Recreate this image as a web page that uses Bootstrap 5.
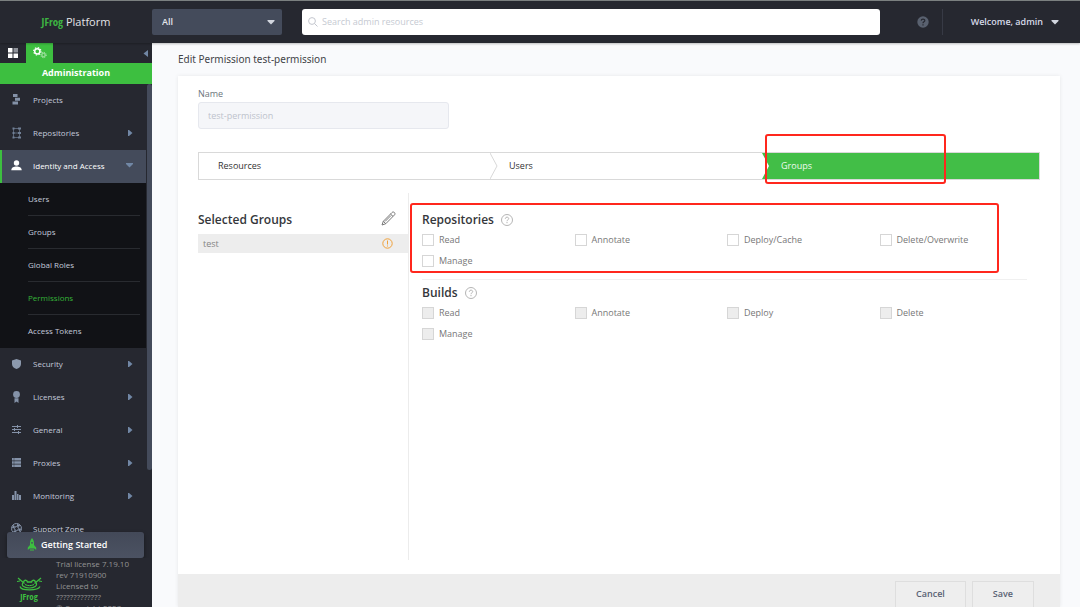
<!DOCTYPE html>
<html lang="en">
<head>
<meta charset="utf-8">
<meta name="viewport" content="width=device-width, initial-scale=1">
<title>JFrog Platform</title>
<link href="https://cdn.jsdelivr.net/npm/bootstrap@5.3.0/dist/css/bootstrap.min.css" rel="stylesheet">
<style>
:root{--jf-green:#3dbf40;--jf-dark:#262830;--jf-slate:#444b5b}
body{font-family:"Open Sans","Noto Sans",sans-serif;font-size:9px;line-height:16px;color:#414347;background:#f9fafc}
a{text-decoration:none}
svg{display:block;flex:none}
button{font:inherit}

/* top bar */
.topbar{height:43px;background:var(--jf-dark);border-top:1px solid #7b8080;box-shadow:0 1px 2px #00000040;z-index:2}
.brand{width:152px;font-size:11px;color:#e4e5e8}
.brand b{font-family:"Open Sans Condensed","Open Sans",sans-serif;font-weight:600;color:#3db342}
.scope-select{width:130px;height:26px;background:var(--jf-slate);color:#e2e4ea;border:0;border-radius:2px;padding:0 10px;font-weight:600;appearance:none}
.scope{position:relative}
.scope svg{position:absolute;right:7px;top:11px;pointer-events:none}
.search{height:26px;background:#fff;border-radius:3px;margin:0 37px 0 20px;padding:0 6px}
.search input{outline:0;color:#414347}
.search input::placeholder{color:#c6cad2;opacity:1}
.account{border-left:1px solid #373a45;height:26px;margin-left:13px;padding:0 21px 0 28px;color:#d6dae8;font-weight:600}

/* side bar */
.sidebar{width:152px;background:var(--jf-dark);position:relative}
.tabs{height:20px}
.tab-btn{width:26px;border:0;background:none;padding:0}
.tab-btn.on{width:27px;background:var(--jf-green)}
.tab-title{height:21px;line-height:19px;background:var(--jf-green);color:#fff;font-weight:700}
.menu-wrap{position:relative}
.menu{margin-right:6px;font-size:8px}
.menu-link{height:33px;color:#c3cadb;padding:0 13px 2px 11px}
.menu-link svg:first-child{margin-right:11px}
.menu-link.on{background:var(--jf-slate);color:#fff;border-left:2px solid var(--jf-green);padding-left:9px}
.submenu{background:#111216;padding:0 6px 0 28px}
.submenu a{display:block;height:33px;line-height:31px;color:#c3cadb;border-bottom:1px solid #292b30}
.submenu li:last-child a{border:0}
.submenu a.on{color:#35b338}
.scroll-thumb{position:absolute;right:0;top:0;width:5px;height:386px;background:var(--jf-slate);border-radius:3px}
.side-foot{position:absolute;left:0;right:0;bottom:0;height:75px}
.side-foot .start-btn{height:26px;margin:0 8px 0 7px;padding:0 20px;border:0;border-radius:3px;background:linear-gradient(#434958,#4b5262);color:#fff;font-weight:600;box-shadow:0 2px 4px #0006}
.license{background:var(--jf-dark);font-size:8px;line-height:11px;color:#949494;height:49px;padding:0 0 0 17px;overflow:hidden}
.license .frog{margin:19px 14px 0 0}
.frog-name{font-size:9px;font-family:"Open Sans Condensed","Open Sans",sans-serif;font-weight:700;fill:#3dbf40}

/* content */
.content{padding:8px 20px 0 26px}
.page-title{font-family:"Noto Sans","Open Sans",sans-serif;font-size:10px;font-weight:400;line-height:16px;margin:0 0 9px}
.sheet{background:#fff;box-shadow:0 0 4px #00000014;min-height:0}
.sheet-body{padding:10px 20px 14px}
.name-box{width:251px;height:27px;background:#f5f6f9;border:1px solid #e6e8ee;border-radius:3px;padding:0 9px;color:#bec3cc}
.steps{display:grid;grid-template-columns:291fr 272fr 277fr;height:28px;margin:23px 0 13px;border:1px solid #d9d9d9}
.step{border:0;background:#fff;padding:0 19px 1px;text-align:left;position:relative;color:#333}
.step svg{position:absolute;right:-8px;top:0;z-index:1}
.step.on{background:#42be47;color:#eefbee}
.marker{position:absolute;border:2px solid #ff271d;border-radius:3px;pointer-events:none;z-index:2}
.marker-step{left:3px;right:93px;top:-19px;bottom:-5px}
.marker-repo{left:-12px;right:28px;top:-4px;bottom:6px}
.groups{width:211px;border-right:1px solid #ececec;padding-top:15px}
.rights{padding:14px 13px 0}
.part-title{font-size:12px;line-height:24px;font-weight:600;margin:0;color:#35373b}
.part-head{gap:7px}
.group-row{height:19px;margin-top:2px;padding:0 15px 0 5px;background:#ededed;color:#858585}
.right-block{position:relative;height:72px;padding-top:1px}
.right-block + .right-block{border-top:1px solid #f0f0f0}
.checks{display:grid;grid-template-columns:repeat(4,1fr);column-gap:5px;row-gap:5px}
.checks label{display:flex;align-items:center;gap:5px;color:#777}
.checks input{appearance:none;width:12px;height:12px;border:1px solid #d6d6d6;background:#fff;margin:0}
.checks input:disabled{background:#ededed}
.sheet-foot{height:33px;background:#ededed;padding:7px 26px 0;gap:6px;overflow:hidden}
.foot-btn{height:27px;background:#eee;border:1px solid #dedede;padding:0 20px 2px;color:#5a6374;font-weight:600}
</style>
</head>
<body class="vh-100 overflow-hidden d-flex flex-column">

<header class="topbar d-flex align-items-center flex-shrink-0">
  <a class="brand text-center" href="#"><b>JFrog</b> Platform</a>
  <div class="scope">
    <select class="scope-select" aria-label="Scope"><option>All</option></select>
    <svg width="8" height="5" viewBox="0 0 8 5"><path d="M.5 0h7v1L4 4.500.5 1z" fill="#d2d6df"/></svg>
  </div>
  <div class="search d-flex align-items-center flex-grow-1">
    <svg width="10" height="10" viewBox="0 0 10 10" fill="none" stroke="#c3c6ce"><circle cx="4" cy="4" r="3.400"/><path d="M6.500 6.500 9.500 9.500"/></svg>
    <input class="border-0 w-100 ms-1 p-0" type="search" placeholder="Search admin resources" aria-label="Search admin resources">
  </div>
  <button class="border-0 bg-transparent p-0" aria-label="Help">
    <svg width="12" height="12" viewBox="0 0 12 12"><circle cx="6" cy="6" r="5.700" fill="#59616f"/><path d="M4.200 4.600C4.300 2.500 7.900 2.600 7.800 4.700 7.800 5.900 6 5.800 6 7.200M6 8.200v1.200" stroke="#262830" stroke-width="1.200" fill="none"/></svg>
  </button>
  <button class="account d-flex align-items-center gap-2 border-top-0 border-end-0 border-bottom-0 bg-transparent">
    <span>Welcome, admin</span>
    <svg width="8" height="5" viewBox="0 0 8 5"><path d="M.5 0h7v1L4 4.500.5 1z" fill="#d2d6df"/></svg>
  </button>
</header>

<div class="d-flex flex-grow-1 overflow-hidden">
  <aside class="sidebar flex-shrink-0 overflow-hidden">
    <div class="tabs d-flex">
      <button class="tab-btn d-flex align-items-center justify-content-center" aria-label="Application">
        <svg width="10" height="10" viewBox="0 0 10 10" fill="#fff"><path d="M0 0h4.500v4.500H0zM0 5.500h4.500V10H0zM5.500 5.500H10V10H5.500z"/><path d="M5.500 0H10v4.500H5.500z" fill="#8f929a"/></svg>
      </button>
      <button class="tab-btn on d-flex align-items-center justify-content-center" aria-label="Administration">
        <svg width="14" height="12" viewBox="0 0 14 12" fill="none" stroke="#fff"><circle cx="4.300" cy="4.300" r="2.600" stroke-width="1.500"/><circle cx="4.300" cy="4.300" r="3.700" stroke-width="1.100" stroke-dasharray="1.450 1.450"/><g stroke="#c9f0c9"><circle cx="10.500" cy="8" r="1.700" stroke-width=".8"/><circle cx="10.500" cy="8" r="2.700" stroke-width=".9" stroke-dasharray="1.060 1.060"/></g></svg>
      </button>
      <button class="ms-auto border-0 bg-transparent p-0 pe-1" aria-label="Collapse">
        <svg width="5" height="7" viewBox="0 0 5 7"><path d="M5 0v7L.5 3.500z" fill="#7187a5"/></svg>
      </button>
    </div>
    <div class="tab-title text-center">Administration</div>
    <div class="menu-wrap">
      <nav class="menu">
        <a class="menu-link d-flex align-items-center" href="#">
          <svg width="11" height="11" viewBox="0 0 11 11" fill="#8492a8"><path d="M2 0h4.500v3H2zM4 3.700h5v3H4zM1.500 7.500H7v3H1.500z"/></svg>Projects</a>
        <a class="menu-link d-flex align-items-center" href="#">
          <svg width="11" height="12" viewBox="0 0 11 12" fill="none" stroke="#718096"><path d="M2.500 1.500v9M2.500 1.500H7M2.500 6H7M2.500 10.500H7M8.500 1v10" stroke-width=".7"/><path d="M1.500 1.500h2M1.500 6h2M1.500 10.500h2M7 1.500h3M7 6h3M7 10.500h3" stroke-width="2"/></svg>Repositories
          <svg class="ms-auto" width="5" height="8" viewBox="0 0 5 8"><path d="M0 1h1l3.500 3L1 7H0z" fill="#7187a5"/></svg></a>
        <a class="menu-link on d-flex align-items-center" href="#">
          <svg width="11" height="11" viewBox="0 0 11 11" fill="#fff"><circle cx="5.500" cy="3" r="2.700"/><path d="M.3 10.300C.3 7.500 3 6.600 5.500 6.600s5.200.9 5.200 3.700z"/></svg>Identity and Access
          <svg class="ms-auto" width="7" height="5" viewBox="0 0 7 5"><path d="M0 0h7v1L3.500 4.500 0 1z" fill="#7187a5"/></svg></a>
        <ul class="submenu list-unstyled mb-0">
          <li><a href="#">Users</a></li>
          <li><a href="#">Groups</a></li>
          <li><a href="#">Global Roles</a></li>
          <li><a class="on" href="#">Permissions</a></li>
          <li><a href="#">Access Tokens</a></li>
        </ul>
        <a class="menu-link d-flex align-items-center" href="#">
          <svg width="11" height="10" viewBox="0 0 11 10" fill="#8c99ad"><path d="M5.500 0 10 1.500V5C10 7.500 8 9.200 5.500 10 3 9.200 1 7.500 1 5V1.500z"/></svg>Security
          <svg class="ms-auto" width="5" height="8" viewBox="0 0 5 8"><path d="M0 1h1l3.500 3L1 7H0z" fill="#7187a5"/></svg></a>
        <a class="menu-link d-flex align-items-center" href="#">
          <svg width="11" height="12" viewBox="0 0 11 12" fill="#8492a8"><circle cx="5.500" cy="3.500" r="3.400"/><path d="M3.500 7.300h4V12l-2-1.600-2 1.600z"/></svg>Licenses
          <svg class="ms-auto" width="5" height="8" viewBox="0 0 5 8"><path d="M0 1h1l3.500 3L1 7H0z" fill="#7187a5"/></svg></a>
        <a class="menu-link d-flex align-items-center" href="#">
          <svg width="11" height="9" viewBox="0 0 11 9" stroke="#8492a8"><path d="M1 1.500h9M1 4.500h9M1 7.500h9M6.500 0v3M3.500 3v3M7.500 6v3"/></svg>General
          <svg class="ms-auto" width="5" height="8" viewBox="0 0 5 8"><path d="M0 1h1l3.500 3L1 7H0z" fill="#7187a5"/></svg></a>
        <a class="menu-link d-flex align-items-center" href="#">
          <svg width="11" height="9" viewBox="0 0 11 9" fill="#8492a8"><path d="M1 0h9v2.500H1zM1 3.200h9v2.500H1zM1 6.500h9V9H1z"/><path d="M3 0v9" stroke="#262830" stroke-width=".4"/></svg>Proxies
          <svg class="ms-auto" width="5" height="8" viewBox="0 0 5 8"><path d="M0 1h1l3.500 3L1 7H0z" fill="#7187a5"/></svg></a>
        <a class="menu-link d-flex align-items-center" href="#">
          <svg width="11" height="9" viewBox="0 0 11 9" fill="#8492a8"><path d="M1 4h2v5H1zM3.500 0h2v9h-2zM6 3h1.500v6H6zM8 4h2v5H8z"/></svg>Monitoring
          <svg class="ms-auto" width="5" height="8" viewBox="0 0 5 8"><path d="M0 1h1l3.500 3L1 7H0z" fill="#7187a5"/></svg></a>
        <a class="menu-link d-flex align-items-center" href="#">
          <svg width="11" height="11" viewBox="0 0 11 11" fill="none" stroke="#8492a8"><circle cx="5.500" cy="5.500" r="5"/><circle cx="5.500" cy="5.500" r="2"/><circle cx="5.500" cy="5.500" r="3.500" stroke-width="2" stroke-dasharray="2.750 2.750"/></svg>Support Zone</a>
      </nav>
      <div class="scroll-thumb"></div>
    </div>
    <div class="side-foot d-flex flex-column">
      <button class="start-btn d-flex align-items-center gap-1 flex-shrink-0">
        <svg width="10" height="14" viewBox="0 0 10 14" fill="#3dbf40"><path d="M5 0C6.800 2 7.200 4 7 7L9.200 9.500V12L7.400 10.500H2.600L.8 12V9.500L3 7C2.800 4 3.200 2 5 0zM3.500 11h1v2h-1zM5.500 11h1v2h-1z"/><circle cx="5" cy="4.800" r=".9" fill="#444b5b"/></svg>
        <span>Getting Started</span>
      </button>
      <div class="license d-flex">
        <svg class="frog" width="25" height="25" viewBox="0 0 25 25" fill="none" stroke="#3dbf40">
          <path d="M1 1 7.500 6.500M24 1l-6.500 5.500M0 4.500l3-.5M25 4.500 22 4M3 9.500c1 4.500 18 4.500 20 0M6 5.500C3.500 9 8 11 12.500 11S21 9 19 5.500" stroke-width="1.200"/><path d="M6.500 5c1-2.500 3.500-2 4 0h4c.5-2 3-2.500 4 0" stroke-width="1.400"/><path d="M8 7.500c3 1.500 6 1.500 9 0"/>
          <text class="frog-name" stroke="none" x="12" y="23" text-anchor="middle">JFrog</text>
        </svg>
        <div>Trial license 7.19.10<br>rev 71910900<br>Licensed to<br>?????????????<br>© Copyright 2023</div>
      </div>
    </div>
  </aside>

  <main class="content flex-grow-1 d-flex flex-column overflow-hidden">
    <h1 class="page-title">Edit Permission test-permission</h1>
    <form class="sheet flex-grow-1 d-flex flex-column">
      <div class="sheet-body flex-grow-1 d-flex flex-column">
        <label for="permName" class="text-secondary">Name</label>
        <input id="permName" class="name-box" value="test-permission" disabled>
        <div class="steps flex-shrink-0">
          <button type="button" class="step">Resources
            <svg width="8" height="26" viewBox="0 0 8 26"><path d="M0 0 7 13 0 26" fill="#fff" stroke="#d9d9d9"/></svg></button>
          <button type="button" class="step">Users
            <svg width="8" height="26" viewBox="0 0 8 26"><path d="M0 0 7 13 0 26z" fill="#fff"/></svg></button>
          <button type="button" class="step on">Groups<span class="marker marker-step"></span></button>
        </div>
        <div class="d-flex flex-grow-1">
          <section class="groups flex-shrink-0">
            <div class="d-flex align-items-center justify-content-between pe-2">
              <h2 class="part-title">Selected Groups</h2>
              <button type="button" class="border-0 bg-transparent p-0 me-1 mb-1" aria-label="Edit groups">
                <svg width="15" height="15" viewBox="0 0 15 15" fill="none" stroke="#777"><path d="M1 14 2.300 10.300 11 1.500c1.500-1.500 4 .7 2.500 2.400L4.800 12.700zM2.300 10.300l2.500 2.400M9.500 3l2.500 2.400M4 10.500l6-6"/></svg>
              </button>
            </div>
            <div class="group-row d-flex align-items-center justify-content-between">
              <span>test</span>
              <svg width="11" height="11" viewBox="0 0 11 11" fill="none" stroke="#f0a13a"><circle cx="5.500" cy="5.500" r="4.700"/><path d="M5.500 2.500v4M5.500 7.500v1"/></svg>
            </div>
          </section>
          <section class="rights flex-grow-1">
            <div class="right-block">
              <div class="part-head d-flex align-items-center">
                <h2 class="part-title">Repositories</h2>
                <svg width="12" height="12" viewBox="0 0 12 12" fill="none" stroke="#b5b5b5"><circle cx="6" cy="6" r="5.500"/><path d="M4.300 4.800c0-2.300 3.500-2.100 3.400-.1C7.700 5.900 6 5.700 6 7.200M6 8v1.200"/></svg>
              </div>
              <div class="checks">
                <label><input type="checkbox">Read</label>
                <label><input type="checkbox">Annotate</label>
                <label><input type="checkbox">Deploy/Cache</label>
                <label><input type="checkbox">Delete/Overwrite</label>
                <label><input type="checkbox">Manage</label>
              </div>
              <span class="marker marker-repo"></span>
            </div>
            <div class="right-block">
              <div class="part-head d-flex align-items-center">
                <h2 class="part-title">Builds</h2>
                <svg width="12" height="12" viewBox="0 0 12 12" fill="none" stroke="#b5b5b5"><circle cx="6" cy="6" r="5.500"/><path d="M4.300 4.800c0-2.300 3.500-2.100 3.400-.1C7.700 5.900 6 5.700 6 7.200M6 8v1.200"/></svg>
              </div>
              <div class="checks">
                <label><input type="checkbox" disabled>Read</label>
                <label><input type="checkbox" disabled>Annotate</label>
                <label><input type="checkbox" disabled>Deploy</label>
                <label><input type="checkbox" disabled>Delete</label>
                <label><input type="checkbox" disabled>Manage</label>
              </div>
            </div>
          </section>
        </div>
      </div>
      <div class="sheet-foot d-flex justify-content-end flex-shrink-0">
        <button type="button" class="foot-btn">Cancel</button>
        <button type="button" class="foot-btn">Save</button>
      </div>
    </form>
  </main>
</div>
<script src="https://cdn.jsdelivr.net/npm/bootstrap@5.3.0/dist/js/bootstrap.bundle.min.js"></script>
</body>
</html>
